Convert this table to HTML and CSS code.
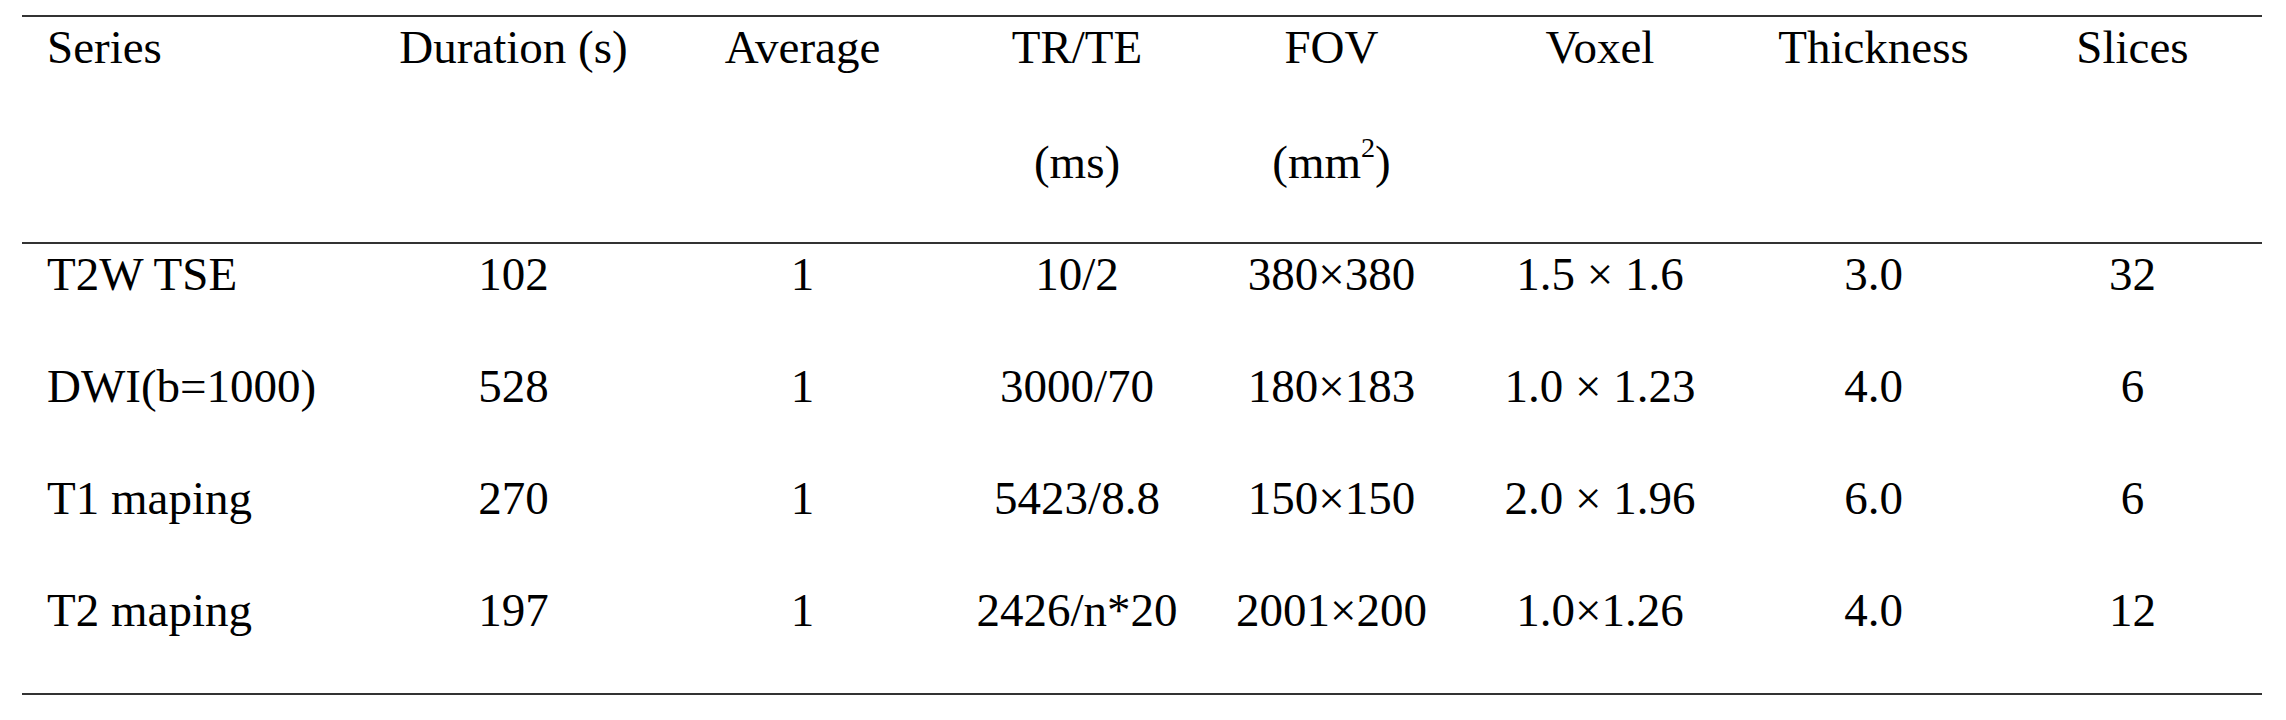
FILE: index.html
```html
<!DOCTYPE html>
<html lang="en">
<head>
    <meta charset="UTF-8">
    <title>Scan parameters</title>
    <link rel="stylesheet" href="styles.css">
</head>
<body>
    <table class="params">
        <colgroup>
            <col class="c-series">
            <col class="c-duration">
            <col class="c-average">
            <col class="c-trte">
            <col class="c-fov">
            <col class="c-voxel">
            <col class="c-thick">
            <col class="c-slices">
        </colgroup>
        <thead>
            <tr>
                <th class="first"><span class="line">Series</span></th>
                <th><span class="line">Duration (s)</span></th>
                <th><span class="line">Average</span></th>
                <th><span class="line">TR/TE</span><span class="line last">(ms)</span></th>
                <th><span class="line">FOV</span><span class="line last">(mm<sup>2</sup>)</span></th>
                <th><span class="line">Voxel</span></th>
                <th><span class="line">Thickness</span></th>
                <th><span class="line">Slices</span></th>
            </tr>
        </thead>
        <tbody>
            <tr>
                <td class="first">T2W TSE</td>
                <td>102</td>
                <td>1</td>
                <td>10/2</td>
                <td>380×380</td>
                <td>1.5 × 1.6</td>
                <td>3.0</td>
                <td>32</td>
            </tr>
            <tr>
                <td class="first">DWI(b=1000)</td>
                <td>528</td>
                <td>1</td>
                <td>3000/70</td>
                <td>180×183</td>
                <td>1.0 × 1.23</td>
                <td>4.0</td>
                <td>6</td>
            </tr>
            <tr>
                <td class="first">T1 maping</td>
                <td>270</td>
                <td>1</td>
                <td>5423/8.8</td>
                <td>150×150</td>
                <td>2.0 × 1.96</td>
                <td>6.0</td>
                <td>6</td>
            </tr>
            <tr class="last-row">
                <td class="first">T2 maping</td>
                <td>197</td>
                <td>1</td>
                <td>2426/n*20</td>
                <td>2001×200</td>
                <td>1.0×1.26</td>
                <td>4.0</td>
                <td>12</td>
            </tr>
        </tbody>
    </table>
</body>
</html>
```

FILE: styles.css
```css
body {
    margin: 0;
    background-color: #ffffff;
    font-family: 'Liberation Serif', 'DejaVu Serif', serif;
    color: #000000;
}

.params {
    margin: 15px 0 0 22px;
    width: 2240px;
    border-collapse: separate;
    border-spacing: 0;
    table-layout: fixed;
    font-family: 'Liberation Serif', 'DejaVu Serif', serif;
    font-size: 47px;
}

.c-series { width: 347px; }
.c-duration { width: 289px; }
.c-average { width: 289px; }
.c-trte { width: 260px; }
.c-fov { width: 249px; }
.c-voxel { width: 288px; }
.c-thick { width: 259px; }
.c-slices { width: 259px; }

.params th,
.params td {
    padding: 2px 0 54px 0;
    text-align: center;
    vertical-align: top;
    font-weight: normal;
    line-height: 56px;
    white-space: nowrap;
}

.params th {
    padding-bottom: 52px;
    border-top: 2px solid #333333;
    border-bottom: 2px solid #333333;
}

.params .last-row td {
    padding-bottom: 55px;
    border-bottom: 2px solid #333333;
}

.params .first {
    text-align: left;
    padding-left: 25px;
}

.line {
    display: block;
    height: 115px;
}

.line.last {
    height: 56px;
}

sup {
    font-size: 0.6em;
    line-height: 0;
    vertical-align: 0.75em;
}
```
